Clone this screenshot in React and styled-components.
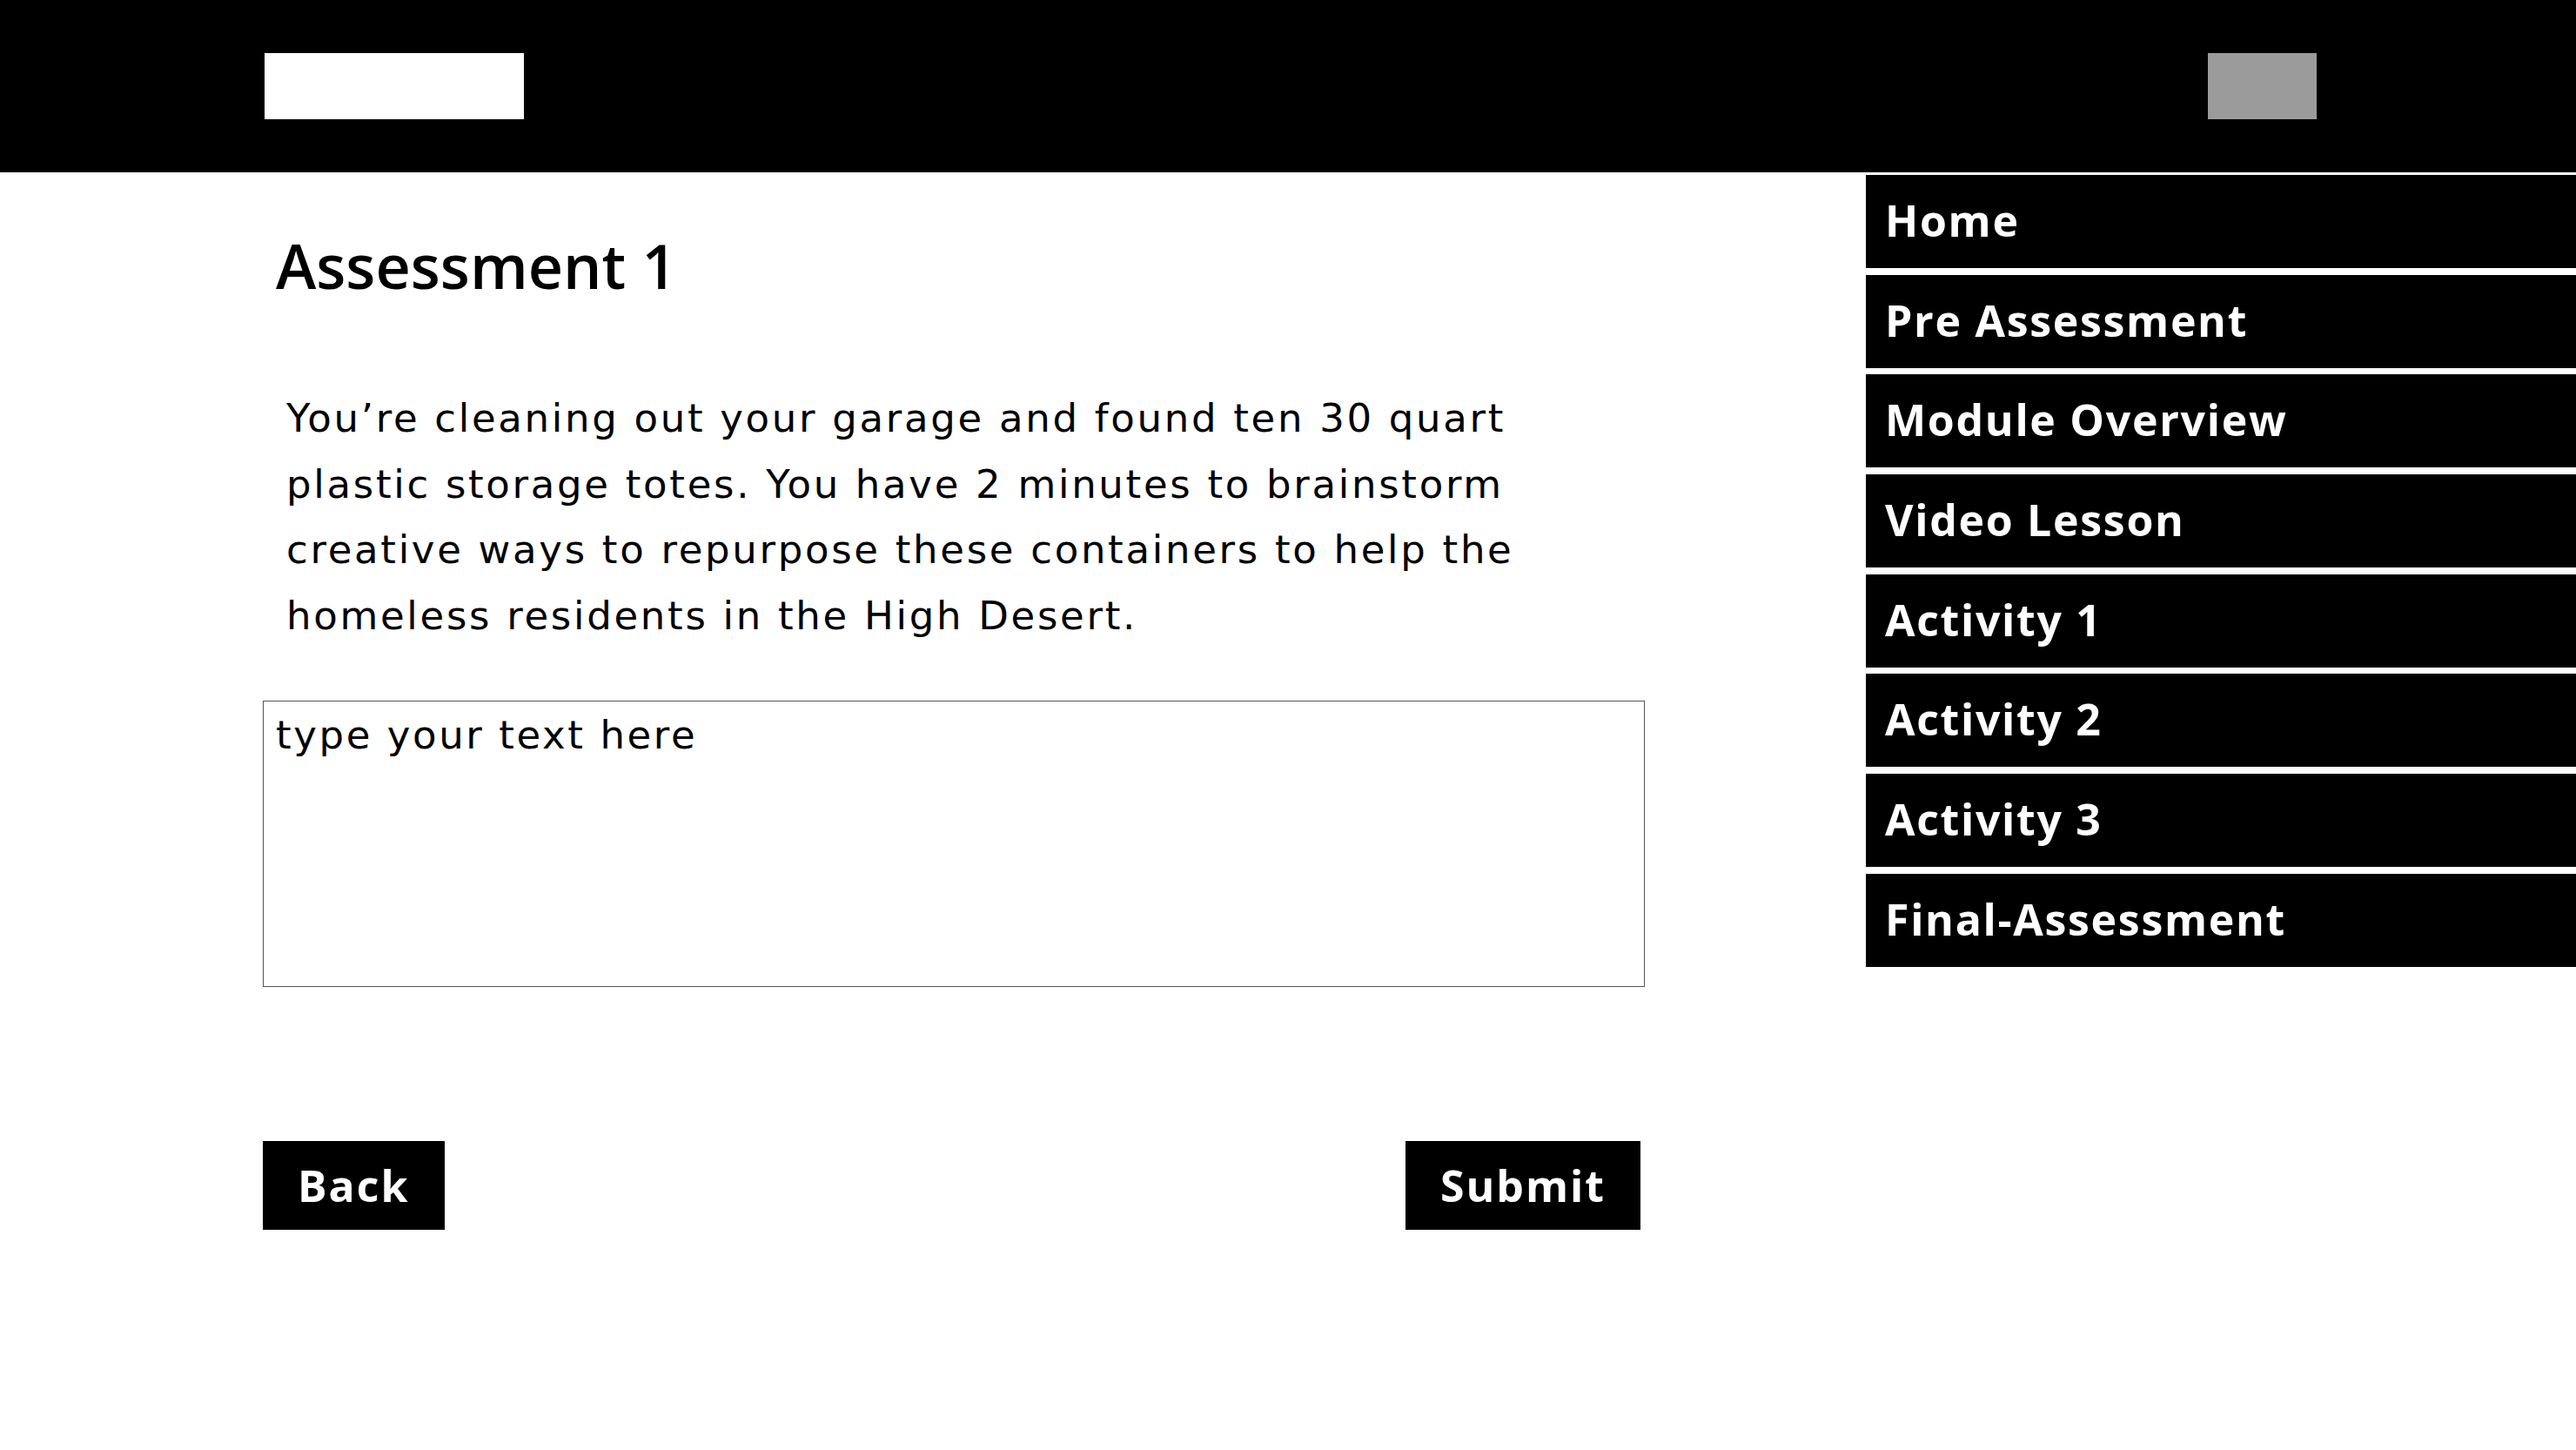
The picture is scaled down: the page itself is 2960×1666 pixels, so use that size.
import styled, { createGlobalStyle } from 'styled-components';

const GlobalStyle = createGlobalStyle`
  html, body {
    margin: 0;
    padding: 0;
    background: #fff;
  }
  body {
    font-family: 'Open Sans', 'Liberation Sans', sans-serif;
    color: #000;
  }
`;

const navItems = [
  'Home',
  'Pre Assessment',
  'Module Overview',
  'Video Lesson',
  'Activity 1',
  'Activity 2',
  'Activity 3',
  'Final-Assessment',
];

export default function App() {
  return (
    <Page>
      <GlobalStyle />
      <Header>
        <Logo />
        <Avatar />
      </Header>
      <Body>
        <Main>
          <Title>Assessment 1</Title>
          <Prompt>
            You’re cleaning out your garage and found ten 30 quart
            <br />
            plastic storage totes. You have 2 minutes to brainstorm
            <br />
            creative ways to repurpose these containers to help the
            <br />
            homeless residents in the High Desert.
          </Prompt>
          <Answer placeholder="type your text here" />
          <Actions>
            <ActionButton>Back</ActionButton>
            <ActionButton>Submit</ActionButton>
          </Actions>
        </Main>
        <Nav>
          {navItems.map(item => (
            <NavItem key={item}>{item}</NavItem>
          ))}
        </Nav>
      </Body>
    </Page>
  );
}

const Page = styled.div`
  width: 2960px;
  min-height: 1666px;
  background: #fff;
`;

const Header = styled.header`
  height: 198px;
  background: #000;
  display: flex;
  align-items: center;
  justify-content: space-between;
  padding: 0 298px 0 304px;
  box-sizing: border-box;
`;

const Logo = styled.div`
  width: 298px;
  height: 76px;
  background: #fff;
`;

const Avatar = styled.div`
  width: 125px;
  height: 76px;
  background: #9b9b9b;
`;

const Body = styled.div`
  display: flex;
  align-items: flex-start;
`;

const Main = styled.main`
  flex: 1;
  padding-left: 302px;
  display: flex;
  flex-direction: column;
  align-items: flex-start;
`;

const Title = styled.h1`
  margin: 72px 0 0 15px;
  font-size: 70px;
  line-height: 70px;
  font-weight: 600;
`;

const Prompt = styled.p`
  margin: 103px 0 0 27px;
  font-family: 'DejaVu Sans', 'Open Sans', sans-serif;
  font-size: 45px;
  line-height: 75.7px;
  font-weight: 400;
  letter-spacing: 2.7px;
`;

const Answer = styled.textarea`
  margin-top: 59px;
  width: 1588px;
  height: 329px;
  box-sizing: border-box;
  border: 1.5px solid #555;
  padding: 12px 14px;
  font-family: 'DejaVu Sans', 'Open Sans', sans-serif;
  font-size: 45px;
  line-height: 54px;
  letter-spacing: 2.6px;
  resize: none;
  outline: none;

  &::placeholder {
    color: #000;
    opacity: 1;
  }
`;

const Actions = styled.div`
  margin-top: 177px;
  width: 1583px;
  display: flex;
  justify-content: space-between;
`;

const ActionButton = styled.button`
  height: 102px;
  padding: 0 40px;
  border: none;
  background: #000;
  color: #fff;
  font-family: 'Open Sans', 'Liberation Sans', sans-serif;
  font-size: 50px;
  font-weight: 700;
  letter-spacing: 2px;
  cursor: pointer;
`;

const Nav = styled.nav`
  width: 816px;
  margin-top: 3px;
  display: flex;
  flex-direction: column;
  gap: 7.7px;
`;

const NavItem = styled.a`
  height: 107px;
  display: flex;
  align-items: center;
  padding: 0 0 3px 22px;
  box-sizing: border-box;
  background: #000;
  color: #fff;
  font-size: 50px;
  font-weight: 700;
  letter-spacing: 1.7px;
  cursor: pointer;
`;
